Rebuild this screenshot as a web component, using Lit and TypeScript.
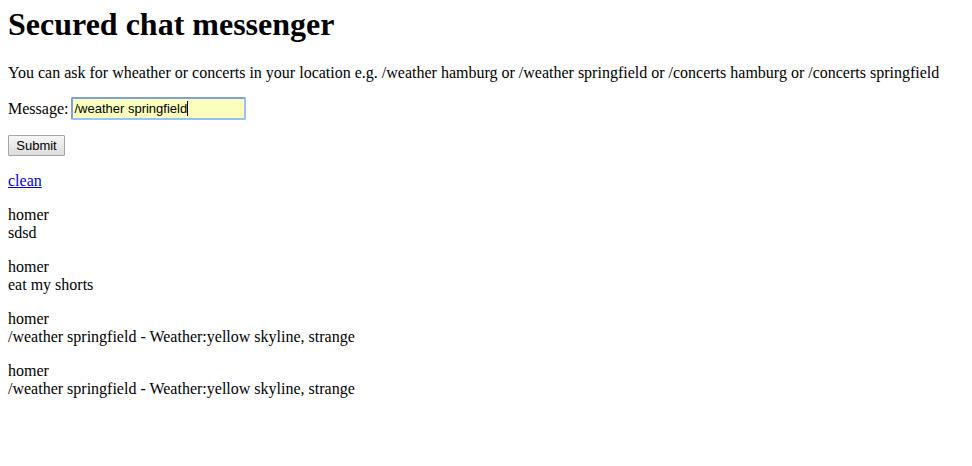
import { LitElement, html, css } from "lit";
import { customElement, state } from "lit/decorators.js";

interface Entry {
  user: string;
  text: string;
}

@customElement("app-root")
export class AppRoot extends LitElement {
  static styles = css`
    :host {
      display: block;
      padding: 8px;
      background: #fff;
      color: #000;
      font-family: "Liberation Serif", "Times New Roman", serif;
      font-size: 16px;
      line-height: 18px;
    }
    h1 {
      margin: 0 0 23px;
      font-size: 32px;
      line-height: 33px;
    }
    p {
      margin: 0 0 16px;
    }
    .hint {
      margin-bottom: 15px;
    }
    .field {
      display: flex;
      align-items: center;
      gap: 3px;
      margin-bottom: 15px;
    }
    .box {
      position: relative;
    }
    .message {
      display: block;
      box-sizing: border-box;
      width: 175px;
      height: 23px;
      padding: 0 1px;
      border: 2px solid #9dbff9;
      border-top-color: #7f9fdc;
      border-left-color: #7f9fdc;
      border-radius: 2px;
      outline: none;
      background: #faffbd;
      color: #000;
      font: 13px "Liberation Sans", Arial, sans-serif;
    }
    .caret {
      position: absolute;
      left: 116px;
      top: 4px;
      width: 1px;
      height: 15px;
      background: #000;
    }
    .submit {
      display: block;
      box-sizing: border-box;
      min-width: 57px;
      height: 21px;
      margin-bottom: 16px;
      padding: 0 7px;
      border: 1px solid #a6a6a6;
      border-radius: 1px;
      background: linear-gradient(#f6f6f6, #dddddd);
      color: #000;
      font: 13px "Liberation Sans", Arial, sans-serif;
    }
    .clean {
      color: #0000ee;
    }
    .user,
    .text {
      display: block;
    }
  `;

  @state() private entries: Entry[] = [
    { user: "homer", text: "sdsd" },
    { user: "homer", text: "eat my shorts" },
    { user: "homer", text: "/weather springfield - Weather:yellow skyline, strange" },
    { user: "homer", text: "/weather springfield - Weather:yellow skyline, strange" },
  ];

  render() {
    return html`
      <h1>Secured chat messenger</h1>
      <p class="hint">You can ask for wheather or concerts in your location e.g. /weather hamburg or /weather springfield or /concerts hamburg or /concerts springfield</p>
      <form @submit=${(e: Event) => e.preventDefault()}>
        <div class="field">
          <label for="message">Message:</label>
          <span class="box">
            <input class="message" id="message" type="text" .value=${"/weather springfield"} />
            <span class="caret"></span>
          </span>
        </div>
        <button class="submit" type="submit">Submit</button>
      </form>
      <p><a class="clean" href="#clean">clean</a></p>
      ${this.entries.map(
        (entry) => html`<p><span class="user">${entry.user}</span><span class="text">${entry.text}</span></p>`
      )}
    `;
  }
}
